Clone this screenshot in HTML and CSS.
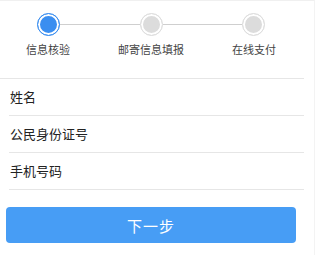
FILE: index.html
```html
<!DOCTYPE html>
<html lang="zh-CN">
<head>
    <meta charset="UTF-8">
    <meta name="viewport" content="width=device-width, initial-scale=1.0">
    <title>信息核验</title>
    <link rel="stylesheet" href="styles.css">
</head>
<body>
    <div class="page">
        <div class="steps">
            <div class="track">
                <span class="dot active"></span>
                <span class="bar"></span>
                <span class="dot"></span>
                <span class="bar"></span>
                <span class="dot"></span>
            </div>
            <div class="labels">
                <span>信息核验</span>
                <span>邮寄信息填报</span>
                <span>在线支付</span>
            </div>
        </div>

        <div class="form">
            <div class="row">姓名</div>
            <div class="row">公民身份证号</div>
            <div class="row">手机号码</div>
        </div>

        <button class="next-btn">下一步</button>
    </div>
</body>
</html>
```

FILE: styles.css
```css
* {
    box-sizing: border-box;
    margin: 0;
    padding: 0;
}

body {
    font-family: "Noto Sans CJK SC", "Noto Sans", sans-serif;
    background: #fff;
    color: #222;
}

.page {
    width: 315px;
    height: 255px;
    border-top: 1px solid #f0f0f0;
    border-right: 1px solid #f3f3f3;
}

.steps {
    width: 304px;
    height: 78px;
    border-bottom: 1px solid #e6e6e6;
    padding-top: 12px;
}

.track {
    display: flex;
    align-items: center;
    padding-left: 37px;
    width: 265px;
}

.dot {
    width: 23px;
    height: 23px;
    border-radius: 50%;
    border: 1px solid #dedede;
    background: #dcdcdc;
    box-shadow: inset 0 0 0 2px #fff;
    flex-shrink: 0;
}

.dot.active {
    border-color: #3a8ef0;
    background: #3a8ef0;
}

.bar {
    flex: 1;
    height: 1px;
    background: #cfcfcf;
}

.labels {
    display: grid;
    grid-template-columns: 96px 110px 96px;
    margin-top: 5px;
    font-size: 11px;
    color: #444;
    text-align: center;
    line-height: 16px;
}

.form {
    margin-left: 9px;
    width: 295px;
}

.row {
    height: 37px;
    line-height: 36px;
    border-bottom: 1px solid #e6e6e6;
    font-size: 13px;
    padding-left: 1px;
}

.next-btn {
    display: block;
    width: 290px;
    height: 36px;
    margin: 17px 0 0 6px;
    border: none;
    border-radius: 4px;
    background: #479df5;
    color: #fff;
    font-family: inherit;
    font-size: 15px;
    letter-spacing: 1px;
}
```
